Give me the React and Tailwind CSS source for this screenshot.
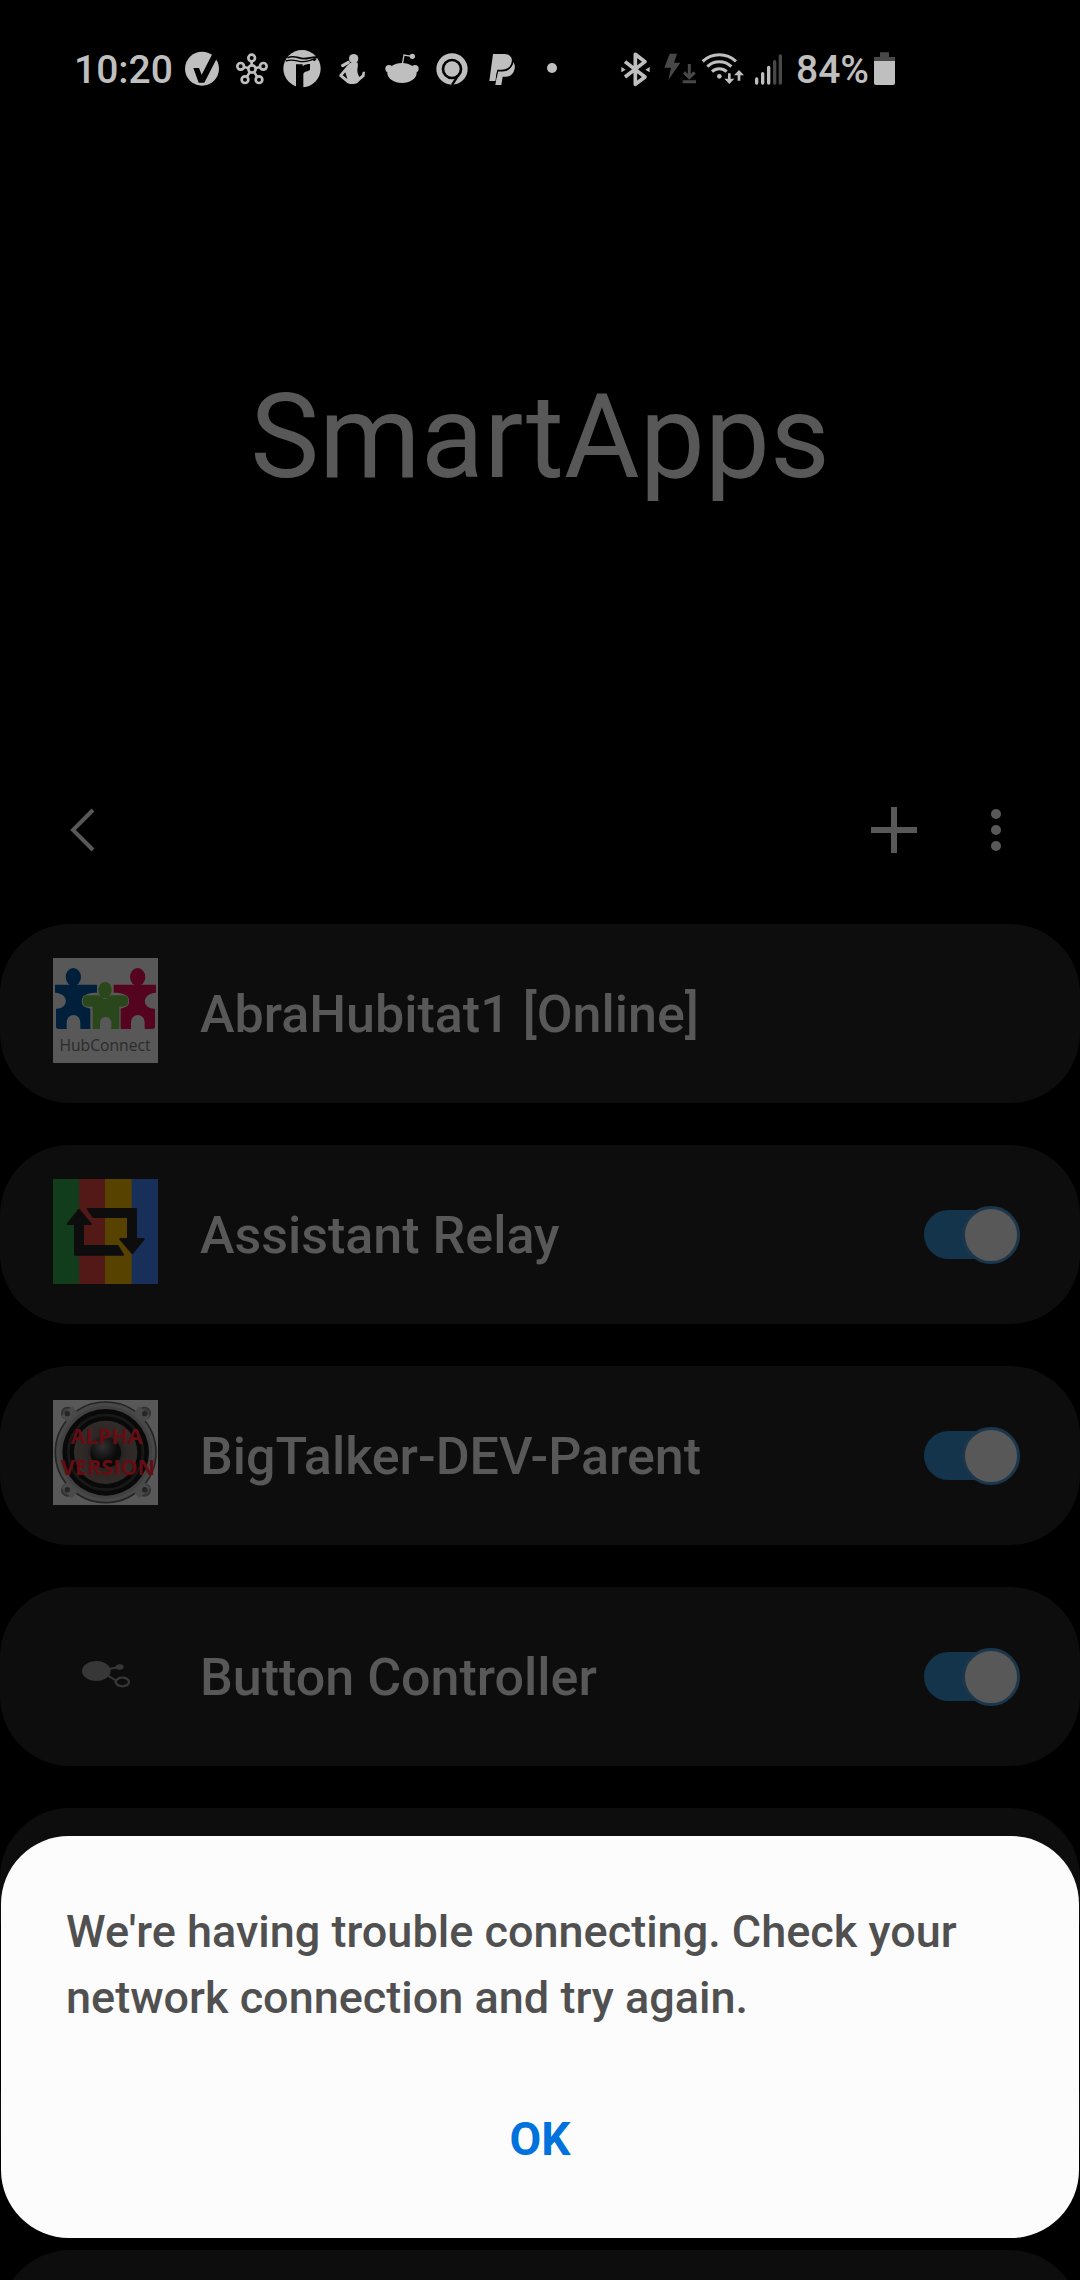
import React from "react";

const CELL = "h-[50px] w-[50px] shrink-0";

function StatusIcons() {
  return (
    <div className="flex items-center" aria-hidden="true">
      {/* check badge */}
      <svg className={CELL} viewBox="351 27 150 150">
        <circle cx="426" cy="101" r="51" fill="#bfbfbf" />
        <path d="M400 99h17l8 20 32-62 14 12-38 74h-17z" fill="#000" />
      </svg>
      {/* hub */}
      <svg className={CELL} viewBox="501 27 150 150" fill="none" stroke="#bfbfbf" strokeWidth="8">
        <circle cx="576" cy="102" r="11" />
        <circle cx="575" cy="69" r="10" />
        <circle cx="542" cy="94" r="10" />
        <circle cx="610" cy="94" r="10" />
        <circle cx="555" cy="134" r="10" />
        <circle cx="597" cy="134" r="10" />
        <path d="M575 79v12M552 96l14 4M600 96l-14 4M561 125l8-13M591 125l-8-13" />
      </svg>
      {/* round r badge */}
      <svg className={CELL} viewBox="651 27 150 150">
        <circle cx="726" cy="101" r="56" fill="#bfbfbf" />
        <g fill="none" stroke="#000" strokeWidth="5">
          <path d="M682 68c22-8 32 2 48 3s28-8 46-4" />
          <path d="M677 78c24-8 34 2 52 2s24-8 40-8" strokeWidth="4" />
        </g>
        <path d="M708 160V88h20v6c6-6 14-7 22-7v17c-6 6-16 4-20 12v44z" fill="#000" />
        <circle cx="763" cy="74" r="4" fill="#000" />
      </svg>
      {/* seated person */}
      <svg className={CELL} viewBox="51 27 150 150">
        <circle cx="131" cy="71" r="14" fill="#bfbfbf" />
        <path d="M120 84l22-2c4 10 0 16 0 24 0 10 4 16 6 20l8-6 2-10 7 0-1 14c-6 8-16 12-22 20-8 4-24 4-30 0L88 124v-4l22-26zM106 112l-8 9 14 11z" fill="#bfbfbf" fillRule="evenodd" />
        <path d="M98 92l17-10" stroke="#bfbfbf" strokeWidth="9" strokeLinecap="round" />
      </svg>
      {/* alien head */}
      <svg className={CELL} viewBox="201 27 150 150">
        <ellipse cx="276" cy="114" rx="44" ry="30" fill="#bfbfbf" />
        <circle cx="237" cy="101" r="11" fill="#bfbfbf" />
        <circle cx="315" cy="101" r="11" fill="#bfbfbf" />
        <circle cx="307" cy="64" r="8" fill="#bfbfbf" />
        <path d="M277 88l5-28 24 4" fill="none" stroke="#bfbfbf" strokeWidth="4" />
      </svg>
      {/* ring */}
      <svg className={CELL} viewBox="351 27 150 150">
        <circle cx="426" cy="102" r="39" fill="none" stroke="#bfbfbf" strokeWidth="16" />
        <circle cx="426" cy="102" r="23" fill="#bfbfbf" />
        <path d="M444 122l-18 28" stroke="#000" strokeWidth="7" />
        <path d="M418 136l12-2-10 15z" fill="#bfbfbf" />
      </svg>
      {/* double P */}
      <svg className={CELL} viewBox="501 27 150 150">
        <path d="M549 57h34c18 0 25 12 22 24-3 17-16 23-31 23h-12l-6 34h-18z" fill="#bfbfbf" />
        <path d="M610 82c6 8 5 16 3 23-4 14-14 20-26 20h-9l-4 25h-18l7-42h15c18 0 28-10 32-26z" fill="#bfbfbf" />
        <path d="M559 128l4-20h13c16 0 28-8 32-25" fill="none" stroke="#000" strokeWidth="3" />
      </svg>
      <svg className={CELL} viewBox="651 27 150 150">
        <circle cx="726" cy="99" r="15" fill="#bfbfbf" />
      </svg>
    </div>
  );
}

function SystemIcons() {
  return (
    <svg className="h-[50px] w-[170px] shrink-0" viewBox="54 27 510 150" aria-hidden="true">
      {/* bluetooth */}
      <path d="M75 80l60 46-29 22V58l29 22-60 46" fill="none" stroke="#bfbfbf" strokeWidth="11" strokeLinejoin="round" />
      <path d="M64 96l13 8-13 8zM149 96l-13 8 13 8z" fill="#bfbfbf" />
      {/* fast download */}
      <path d="M209 56h22l-9 27h19l-36 52 8-37h-20z" fill="#484848" />
      <path d="M268 87v40M252 112l16 16 16-16M248 140h40" fill="none" stroke="#484848" strokeWidth="9" />
      {/* wifi */}
      <g fill="none" stroke="#bfbfbf" strokeWidth="9">
        <path d="M308 79a73 73 0 0 1 100 0" />
        <path d="M322 95a52 52 0 0 1 72 0" />
        <path d="M336 110a32 32 0 0 1 44 0" />
      </g>
      <circle cx="358" cy="124" r="7" fill="#bfbfbf" />
      <path d="M384 115h8v16h11l-15 16-15-16h11zM413 137v-16h-11l15-16 15 16h-11v16z" fill="#bfbfbf" />
      {/* signal */}
      <g strokeWidth="10" strokeLinecap="round" stroke="#bfbfbf">
        <path d="M470 132v12M488 116v28M506 97v47" />
        <path d="M524 80v64M541 63v81" stroke="#484848" />
      </g>
    </svg>
  );
}

function HubConnectIcon() {
  return (
    <svg className="h-full w-full" viewBox="159 144 315 315">
      <path d="M159 144h315v315H159z" fill="#585858" />
      <g fill="#001f3a">
        <ellipse cx="220" cy="201" rx="23" ry="27" />
        <path d="M209 220h22v10h-22z" />
        <path d="M165 224h126v24c-22 0-46 4-46 26 0 14 14 20 26 22v61h-30v-18c0-32-41-32-41 0v18h-24q-8 0-8-8v-53c38 2 42-46-3-48z" />
      </g>
      <g fill="#55041f">
        <ellipse cx="413" cy="201" rx="23" ry="27" />
        <path d="M468 224H341v24c22 0 46 4 46 26 0 14-14 20-25 22v61h31v-18c0-32 41-32 41 0v18h23q8 0 8-8v-53c-40 2-42-46 3-48z" />
      </g>
      <path d="M262 256h106q17 0 17 17t-17 17h-10v67h-24v-18c0-24-34-24-34 0v18h-22v-67h-16q-14 0-14-17t14-17z" fill="#2a471b" stroke="#585858" strokeWidth="4" paintOrder="stroke" />
      <ellipse cx="315" cy="240" rx="20" ry="24" fill="#2a471b" stroke="#585858" strokeWidth="5" paintOrder="stroke" />
      <path d="M300 252h30v12h-30z" fill="#2a471b" />
      <text x="315" y="423" textAnchor="middle" fontFamily="'Open Sans', sans-serif" fontSize="47" fill="#2b2b2b">HubConnect</text>
    </svg>
  );
}

function RelayIcon() {
  return (
    <svg className="h-full w-full" viewBox="159 117 315 315">
      <path d="M159 117h79v315h-79z" fill="#123d1d" />
      <path d="M237 117h79v315h-79z" fill="#521916" />
      <path d="M315 117h81v315h-81z" fill="#574200" />
      <path d="M395 117h79v315h-79z" fill="#172f59" />
      <g fill="#0d0d0d" stroke="#0d0d0d" strokeWidth="6" strokeLinejoin="round">
        <path d="M237 210l35 42h-23v66h104l16 26H225v-92h-22z" />
        <path d="M397 339l-36-42h23v-66H280l-17-24h145v90h23z" />
      </g>
    </svg>
  );
}

function SpeakerIcon() {
  return (
    <svg className="h-full w-full" viewBox="159 120 315 315">
      <defs>
        <radialGradient id="cone">
          <stop offset="0" stopColor="#171515" />
          <stop offset="0.45" stopColor="#211e1d" />
          <stop offset="0.6" stopColor="#2c2725" />
          <stop offset="1" stopColor="#312c2a" />
        </radialGradient>
        <radialGradient id="cap" cx="0.4" cy="0.3">
          <stop offset="0" stopColor="#303030" />
          <stop offset="1" stopColor="#0a0a0a" />
        </radialGradient>
      </defs>
      <path d="M159 120h315v315H159z" fill="#585858" />
      <g fill="#3c3c3c" stroke="#2f2f2f" strokeWidth="4">
        <circle cx="203" cy="160" r="18" />
        <circle cx="433" cy="160" r="18" />
        <circle cx="203" cy="390" r="18" />
        <circle cx="433" cy="390" r="18" />
      </g>
      <circle cx="317" cy="277" r="151" fill="#484848" stroke="#242424" strokeWidth="5" />
      <path d="M192 177l32-29M442 177l-32-29M192 375l32 31M442 375l-32 31" stroke="#4a4a4a" strokeWidth="24" />
      <g fill="#252525">
        <circle cx="202" cy="161" r="8" />
        <circle cx="434" cy="161" r="8" />
        <circle cx="202" cy="389" r="8" />
        <circle cx="434" cy="389" r="8" />
      </g>
      <circle cx="317" cy="277" r="139" fill="#414141" />
      <circle cx="317" cy="277" r="130" fill="#090909" />
      <circle cx="317" cy="277" r="112" fill="none" stroke="#181818" strokeWidth="8" />
      <circle cx="317" cy="277" r="95" fill="url(#cone)" />
      <circle cx="317" cy="278" r="46" fill="url(#cap)" />
      <g fontFamily="'Open Sans', sans-serif" fontWeight="700" fontSize="65" fill="#650d13" textAnchor="middle">
        <text x="320" y="251">ALPHA</text>
        <text x="324" y="346">VERSION</text>
      </g>
    </svg>
  );
}

function ButtonControllerIcon() {
  return (
    <svg className="h-full w-full" viewBox="159 124 315 315">
      <ellipse cx="289" cy="274" rx="43" ry="30" fill="#373737" />
      <ellipse cx="359" cy="262" rx="12" ry="8" fill="#373737" />
      <path d="M325 269l28-6M324 288l26 16" stroke="#373737" strokeWidth="6" />
      <ellipse cx="367" cy="307" rx="20" ry="13" fill="none" stroke="#373737" strokeWidth="7" />
    </svg>
  );
}

const apps = [
  { id: "abra", name: "AbraHubitat1 [Online]", Icon: HubConnectIcon, toggle: false },
  { id: "relay", name: "Assistant Relay", Icon: RelayIcon, toggle: true },
  { id: "talker", name: "BigTalker-DEV-Parent", Icon: SpeakerIcon, toggle: true },
  { id: "button", name: "Button Controller", Icon: ButtonControllerIcon, toggle: true },
  { id: "empty-1" },
  { id: "empty-2" },
  { id: "empty-3" },
];

function AppRow({ id, name, Icon, toggle }) {
  const Name = toggle ? "label" : "span";
  return (
    <li className="flex h-[179px] shrink-0 items-center rounded-[70px] bg-[#0d0d0d] pr-[60px] pl-[53px]">
      {Icon && (
        <span className="mb-1.5 h-[105px] w-[105px] shrink-0" aria-hidden="true">
          <Icon />
        </span>
      )}
      {name && (
        <Name htmlFor={toggle ? id : undefined} className="ml-[42px] flex-1 pt-0.5 text-[52px] leading-[64px] font-medium">
          {name}
        </Name>
      )}
      {toggle && (
        <input
          id={id}
          type="checkbox"
          role="switch"
          defaultChecked
          className="relative h-[58px] w-24 shrink-0 appearance-none before:absolute before:top-1 before:left-0 before:h-[49px] before:w-[84px] before:rounded-full before:bg-[#14344c] after:absolute after:top-0 after:right-0 after:h-[58px] after:w-[58px] after:rounded-full after:border-[3px] after:border-[#1a374c] after:bg-[#585858]"
        />
      )}
    </li>
  );
}

export default function App() {
  return (
    <div className="relative flex h-screen flex-col overflow-hidden bg-black font-[Roboto,sans-serif] text-[#585858]">
      <div className="flex h-[138px] shrink-0 items-center pl-[74px] text-[39px] leading-[48px] font-medium text-[#bfbfbf]">
        <time className="w-[103px] pt-0.5">10:20</time>
        <StatusIcons />
        <div className="ml-[41px] flex items-center">
          <SystemIcons />
          <span className="ml-2 w-[74px] pt-0.5 whitespace-nowrap">84%</span>
          <svg className="ml-1 h-[50px] w-[21px]" viewBox="822 27 63 150" aria-hidden="true">
            <path d="M840 52h27v14h18v12h-63V66h18z" fill="#484848" />
            <path d="M822 78h63v66q0 6-6 6h-51q-6 0-6-6z" fill="#bfbfbf" />
          </svg>
        </div>
      </div>

      <header className="shrink-0">
        <h1 className="flex h-[597px] items-center justify-center text-[116px] leading-[140px]">SmartApps</h1>
        <div className="flex h-[189px] items-center px-[45px]">
          <button type="button" aria-label="Back" className="h-[76px] w-[76px]">
            <svg className="h-full w-full" viewBox="0 0 76 76" fill="none" stroke="currentColor" strokeWidth="4">
              <path d="M48 18L28 38l20 20" />
            </svg>
          </button>
          <button type="button" aria-label="Add" className="ml-auto h-[76px] w-[76px]">
            <svg className="h-full w-full" viewBox="0 0 76 76" fill="none" stroke="currentColor" strokeWidth="6">
              <path d="M37 15v46M14 38h46" />
            </svg>
          </button>
          <button type="button" aria-label="More options" className="ml-[26px] h-[76px] w-[76px]">
            <svg className="h-full w-full" viewBox="0 0 76 76" fill="currentColor">
              <circle cx="37" cy="22" r="5" />
              <circle cx="37" cy="38" r="5" />
              <circle cx="37" cy="54" r="5" />
            </svg>
          </button>
        </div>
      </header>

      <ul className="flex flex-col gap-[42px]">
        {apps.map((app) => (
          <AppRow key={app.id} {...app} />
        ))}
      </ul>

      <div
        role="alertdialog"
        aria-modal="true"
        aria-describedby="message"
        className="absolute inset-x-px bottom-[42px] flex flex-col items-center rounded-[68px] bg-[#fcfcfc] px-[65px] pt-[63px] pb-[66px] text-[45px] leading-[66px]"
      >
        <p id="message" className="w-full font-medium text-[#505050]">
          We're having trouble connecting. Check your network connection and try again.
        </p>
        <button type="button" className="mt-[75px] px-8 text-[46px] font-bold text-[#0072de]">
          OK
        </button>
      </div>
    </div>
  );
}
